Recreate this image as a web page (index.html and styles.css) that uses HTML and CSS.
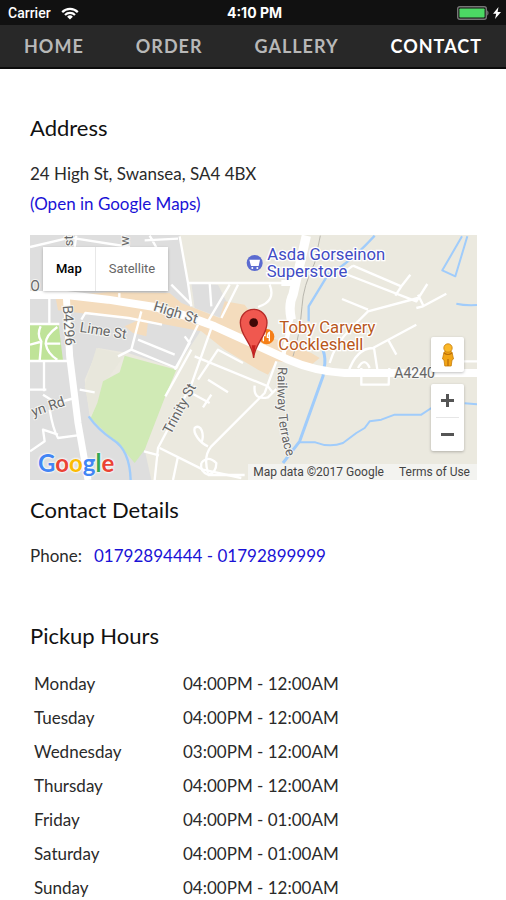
FILE: index.html
```html
<!DOCTYPE html>
<html lang="en">
<head>
<meta charset="utf-8">
<meta name="viewport" content="width=device-width, initial-scale=1">
<title>Contact</title>
<link rel="stylesheet" href="styles.css">
</head>
<body>
<div class="status">
  <div class="status-left">
    <span>Carrier</span>
    <svg class="wifi" viewBox="0 0 18 13" aria-hidden="true">
      <path d="M1.2 5.1a11 11 0 0 1 15.6 0M4 8a7.1 7.1 0 0 1 10 0" fill="none" stroke="#fff" stroke-width="2.2"/>
      <path d="M9 12.6 6.1 9.7a4.1 4.1 0 0 1 5.8 0z" fill="#fff"/>
    </svg>
  </div>
  <strong class="time">4:10 PM</strong>
  <div class="status-right">
    <svg class="battery" viewBox="0 0 32 14" aria-hidden="true">
      <rect x=".7" y=".7" width="28.6" height="12.6" rx="2" fill="#111" stroke="#777" stroke-width="1.4"/>
      <rect x="2.4" y="2.4" width="25.2" height="9.2" rx=".8" fill="#4cd964"/>
      <path d="M30.2 4.500c1.800.500 1.800 4.500 0 5z" fill="#777"/>
    </svg>
    <svg class="bolt" viewBox="0 0 8 12" aria-hidden="true"><path d="M5.500 0 0 6.800h3.200L2 12l6-7H4.600z" fill="#fff"/></svg>
  </div>
</div>
<nav class="nav">
  <a href="#home">HOME</a>
  <a href="#order">ORDER</a>
  <a href="#gallery">GALLERY</a>
  <a href="#contact" class="active" aria-current="page">CONTACT</a>
</nav>
<main class="page" id="contact">
  <section>
    <h2>Address</h2>
    <p>24 High St, Swansea, SA4 4BX<br><a href="#maps">(Open in Google Maps)</a></p>
    <div class="map" id="maps">
      <svg class="map-art" viewBox="6 6 1341 735" role="img" aria-label="Map of High St, Swansea">
        <rect x="6" y="6" width="1341" height="735" fill="#ebe9df"/>
        <!-- built-up area -->
        <path d="M6 6H455L490 215 520 290 480 380 440 405 300 360 210 345 170 440 185 550 380 650 375 741H6z" fill="#dedede"/>
        <path d="M490 150l80 5 30 60-20 40-80-30z" fill="#dedede"/>
        <path d="M205 345l85 20-50 70-30 75-22 40-18-90z" fill="#e8e7dc"/>
        <path d="M350 650L445 405 520 290 570 310 700 450 560 741H370z" fill="#ebe9df"/>
        <!-- shopping streets -->
        <path d="M82 190L240 178 425 180 460 210 575 255 590 205 650 215 720 310 850 360 875 375 850 395 745 385 720 425 690 410 590 350 520 295 360 265 355 310 315 300 290 280 330 262 90 232z" fill="#f4dcbd"/>
        <!-- parks -->
        <path d="M290 368L445 410 412 490 350 650 320 690 290 655 188 555 208 510 225 445 275 418z" fill="#d0eab5"/>
        <path d="M6 275H92L105 383H6z" fill="#bfe398"/>
        <!-- water -->
        <g fill="none" stroke="#a0ccfb" stroke-width="7" stroke-linejoin="round">
          <path d="M1040 8Q960 95 900 125L842 220V265"/>
          <path d="M885 350Q895 380 888 405L885 430 815 625 765 690" stroke-width="9"/>
          <path d="M812 628H862Q905 645 945 630L985 600 1010 585 1025 565 1060 560 1100 545 1180 545 1210 525M1310 511l37 3M1285 212Q1310 218 1347 216" stroke-width="6"/>
          <path d="M1302 10L1243 112 1282 130 1318 10" stroke-width="6"/>
          <path d="M182 550Q210 590 255 620 305 650 308 741"/>
        </g>
        <!-- railway -->
        <path d="M877 8L860 90Q825 160 822 220 815 310 795 370" fill="none" stroke="#b9b7ae" stroke-width="3"/>
        <!-- side streets -->
        <g fill="none" stroke="#fff" stroke-width="7" stroke-linejoin="round">
          <path d="M145 8l-5 34M290 8l-5 34M365 8l20 35M6 42l120-28 180 28M350 22l100-5M455 10l25 140 10 70M430 155l60 60M480 150H780M545 150l5 70M605 155L540 265M630 155L580 255M725 155Q745 205 690 222M274 180v14"/>
          <path d="M64 190V275M6 273H94M38 280q-12 25 2 45l-5 58M88 282q-35 25-35 50 5 30 35 48M6 335l30-8M52 332h45M48 385v90M6 470H55M6 384H120M45 485l40 25 55-15M65 530q10 60 25 85l75-10M6 655l44-30-5-35 45 15M155 470l45 8"/>
          <path d="M160 260l12-20 130 15 100 20M340 235L310 350 270 370M330 320l110 45M310 350l135 55 65-130M470 310l15 20-45 80M550 285L490 455M490 350L412 490M500 370L720 460 735 480"/>
          <path d="M510 440L570 350 645 390M540 440l60 38M480 475l65 35M550 485l-25 38M490 455l-100 190-10 96M348 655l45 12M395 645l130 65 115 25M450 670l-15 71"/>
          <path d="M745 385L710 480 550 640Q525 670 540 720M680 458q-5 45 40 35l25-25"/>
          <path d="M540 640C515 630 495 600 500 585 520 570 530 605 520 630M520 690q20-25 45 0 0 30-25 35-25-10-20-35M540 726H650"/>
          <path d="M975 98L1120 160 1147 125M945 120L1165 205 1198 153M1120 160l-18 28M975 98L945 120M942 198L1020 230M1255 182L1185 220 1165 225M1170 185l17 35M1170 195L1020 235 970 285Q920 335 905 390M960 420Q985 345 1035 345L1165 275M1080 320l25 45M1038 345l10 65"/>
          <path d="M1000 405v50h82l2-50M990 405q20-35 35 0M1300 385h47M1140 430l50-10"/>
        </g>
        <!-- main roads -->
        <g fill="none" stroke="#fff" stroke-linejoin="round">
          <path d="M835 8L795 185Q780 215 790 260" stroke-width="28"/>
          <path d="M790 255L765 370" stroke-width="13"/>
          <path d="M760 150H810" stroke-width="18"/>
          <path d="M115 190L125 370 150 570 180 741" stroke-width="21"/>
          <path d="M6 186H115L240 200 380 222Q470 245 560 280L780 380Q860 415 950 420H1347" stroke-width="24"/>
        </g>
        <path id="railway-terrace" d="M750 402C748 500 744 590 784 692" fill="none"/>
        <g class="road-label">
          <text x="7" y="175">O</text>
          <text transform="translate(104 218) rotate(86)">B4296</text>
          <text transform="translate(154 296) rotate(9)">Lime St</text>
          <text transform="translate(374 232) rotate(17)">High St</text>
          <text transform="translate(16 551) rotate(-19)">yn Rd</text>
          <text transform="translate(428 606) rotate(-62)">Trinity St</text>
          <text class="small"><textPath href="#railway-terrace">Railway Terrace</textPath></text>
          <text x="1099" y="436">A4240</text>
          <text transform="translate(136 40) rotate(-90)" class="small">st</text>
          <text transform="translate(304 38) rotate(-90)" class="small">w</text>
        </g>
        <g class="place shop">
          <text x="718" y="81">Asda Gorseinon</text>
          <text x="716" y="131">Superstore</text>
        </g>
        <g class="place food">
          <text x="754" y="301">Toby Carvery</text>
          <text x="751" y="351">Cockleshell</text>
        </g>
        <circle cx="680" cy="90" r="24" fill="#5b6bd0"/>
        <path d="M664 80h32l-4 19h-23z" fill="#fff"/>
        <circle cx="673" cy="105" r="3" fill="#fff"/><circle cx="688" cy="105" r="3" fill="#fff"/>
        <circle cx="716" cy="311" r="23" fill="#f57f17"/>
        <path d="M706 298v27M701 298v10h10v-10M724 325v-27q-6 3-6 15h6" fill="none" stroke="#fff" stroke-width="4"/>
        <path d="M677 375C674 330 637 310 637 269a40 40 0 0 1 80 0c0 41-37 61-40 106z" fill="#f0584f" stroke="#b52b28" stroke-width="4"/>
        <path d="M677 375l-6-38h12z" fill="#c9201e"/>
        <circle cx="677" cy="269" r="13" fill="#3f0907"/>
      </svg>
      <div class="map-type">
        <button type="button" class="selected">Map</button>
        <button type="button">Satellite</button>
      </div>
      <div class="map-controls">
        <button type="button" class="pegman" aria-label="Street View">
          <svg viewBox="0 0 16 24" aria-hidden="true">
            <path d="M4 9Q8 7 12 9L13.500 16l-1.500 1-.8 6H4.800L4 17l-1.500-1z" fill="#f2a516" stroke="#c77d0b" stroke-width=".8"/>
            <path d="M4 10q4 3 8 0M8 16v7" fill="none" stroke="#b96d08" stroke-width="1.200"/>
            <circle cx="8" cy="5" r="4.200" fill="#fbb829" stroke="#c77d0b" stroke-width=".8"/>
          </svg>
        </button>
        <div class="zoom">
          <button type="button" aria-label="Zoom in"><svg viewBox="0 0 13 13" aria-hidden="true"><path d="M0 6.500h13M6.500 0v13" stroke="#555" stroke-width="3"/></svg></button>
          <button type="button" aria-label="Zoom out"><svg viewBox="0 0 13 13" aria-hidden="true"><path d="M0 6.500h13" stroke="#555" stroke-width="3"/></svg></button>
        </div>
      </div>
      <a class="logo" href="#google"><span class="b">G</span><span class="r">o</span><span class="y">o</span><span class="b">g</span><span class="g">l</span><span class="r">e</span></a>
      <div class="credits"><span>Map data ©2017 Google</span><a href="#terms">Terms of Use</a></div>
    </div>
  </section>
  <section>
    <h2>Contact Details</h2>
    <p class="phone"><span>Phone:</span><a href="tel:01792894444">01792894444 - 01792899999</a></p>
  </section>
  <section>
    <h2>Pickup Hours</h2>
    <table class="hours">
      <tr><th scope="row">Monday</th><td>04:00PM - 12:00AM</td></tr>
      <tr><th scope="row">Tuesday</th><td>04:00PM - 12:00AM</td></tr>
      <tr><th scope="row">Wednesday</th><td>03:00PM - 12:00AM</td></tr>
      <tr><th scope="row">Thursday</th><td>04:00PM - 12:00AM</td></tr>
      <tr><th scope="row">Friday</th><td>04:00PM - 01:00AM</td></tr>
      <tr><th scope="row">Saturday</th><td>04:00PM - 01:00AM</td></tr>
      <tr><th scope="row">Sunday</th><td>04:00PM - 12:00AM</td></tr>
    </table>
  </section>
</main>
</body>
</html>
```
FILE: styles.css
```css
* { box-sizing: border-box; }
body {
  margin: 0;
  background: #fff;
  color: #2a2a2a;
  font: 17px/30px Lato, "Liberation Sans", sans-serif;
}
a { color: #1a12d6; text-decoration: none; }
button { border: 0; padding: 0; background: #fff; font: inherit; }
svg { display: block; }

.status {
  display: grid;
  grid-template-columns: 1fr auto 1fr;
  align-items: center;
  height: 25px;
  padding: 1px 5px 0 8px;
  background: #111;
  color: #fff;
  font: 500 14px/20px Roboto, "Liberation Sans", sans-serif;
}
.status-left, .status-right { display: flex; align-items: center; gap: 10px; }
.status-right { justify-content: flex-end; gap: 4px; }
.time { font: 700 14px/20px Inter, "Liberation Sans", sans-serif; }
.wifi { width: 18px; height: 13px; }
.battery { width: 32px; height: 14px; }
.bolt { width: 8px; height: 12px; }

.nav {
  display: flex;
  justify-content: space-between;
  padding: 0 24px;
  background: #282828;
  border-bottom: 2px solid #0c0c0c;
}
.nav a {
  color: #b8b8b8;
  font-size: 18px;
  font-weight: 700;
  line-height: 42px;
  letter-spacing: 1px;
}
.nav .active { color: #fff; }

.page { padding: 43px 29px 0 30px; }
h2 { margin: 0; color: #111; font-size: 22px; font-weight: 400; line-height: 32px; }
p { margin: 15px 0 16px; }

.map { position: relative; margin-bottom: 14px; overflow: hidden; }
.map-art { width: 100%; height: auto; }
.road-label text {
  font: 42px Roboto, sans-serif;
  fill: #666;
  stroke: #f5f5f2;
  stroke-width: 6px;
  paint-order: stroke;
}
.road-label .small { font-size: 39px; }
.place text {
  font: 50px Roboto, sans-serif;
  stroke: #fff;
  stroke-width: 8px;
  paint-order: stroke;
}
.shop text { fill: #3f4bc4; }
.food text { fill: #b9571b; }

.map-type {
  position: absolute;
  top: 12px;
  left: 13px;
  display: flex;
  border-radius: 2px;
  box-shadow: 0 1px 3px rgba(0, 0, 0, .25);
  font: 13px/44px Roboto, sans-serif;
}
.map-type button { padding: 0 13px; color: #666; }
.map-type .selected { border-right: 1px solid #e8e8e8; color: #000; font-weight: 500; }
.map-controls {
  position: absolute;
  right: 13px;
  bottom: 29px;
  display: grid;
  gap: 12px;
  width: 33px;
}
.pegman, .zoom { border-radius: 2px; background: #fff; box-shadow: 0 1px 3px rgba(0, 0, 0, .25); }
.pegman { display: grid; place-items: center; height: 35px; }
.pegman svg { width: 16px; height: 24px; }
.zoom { padding: 0 5px; }
.zoom button { display: grid; place-items: center; width: 100%; height: 33px; }
.zoom button + button { height: 34px; border-top: 1px solid #e6e6e6; }
.zoom svg { width: 13px; height: 13px; }

.logo {
  position: absolute;
  left: 8px;
  bottom: 3px;
  font: 700 24px/28px Lato, sans-serif;
  text-shadow: 0 0 2px #fff, 0 0 2px #fff, 0 0 3px #fff;
}
.b { color: #4285f4; }
.r { color: #ea4335; }
.y { color: #fbbc05; }
.g { color: #34a853; }
.credits {
  position: absolute;
  right: 0;
  bottom: 0;
  display: flex;
  gap: 15px;
  padding: 0 7px 0 5px;
  background: rgba(245, 245, 245, .75);
  font: 12px/16px Roboto, sans-serif;
  color: #444;
}
.credits a { color: #444; }

.phone { display: flex; gap: 12px; margin-bottom: 49px; }
.hours { width: 100%; margin-top: 15px; border-collapse: collapse; }
.hours th, .hours td { padding: 2px 4px; font-weight: 400; text-align: left; }
.hours th { width: 149px; }
```
